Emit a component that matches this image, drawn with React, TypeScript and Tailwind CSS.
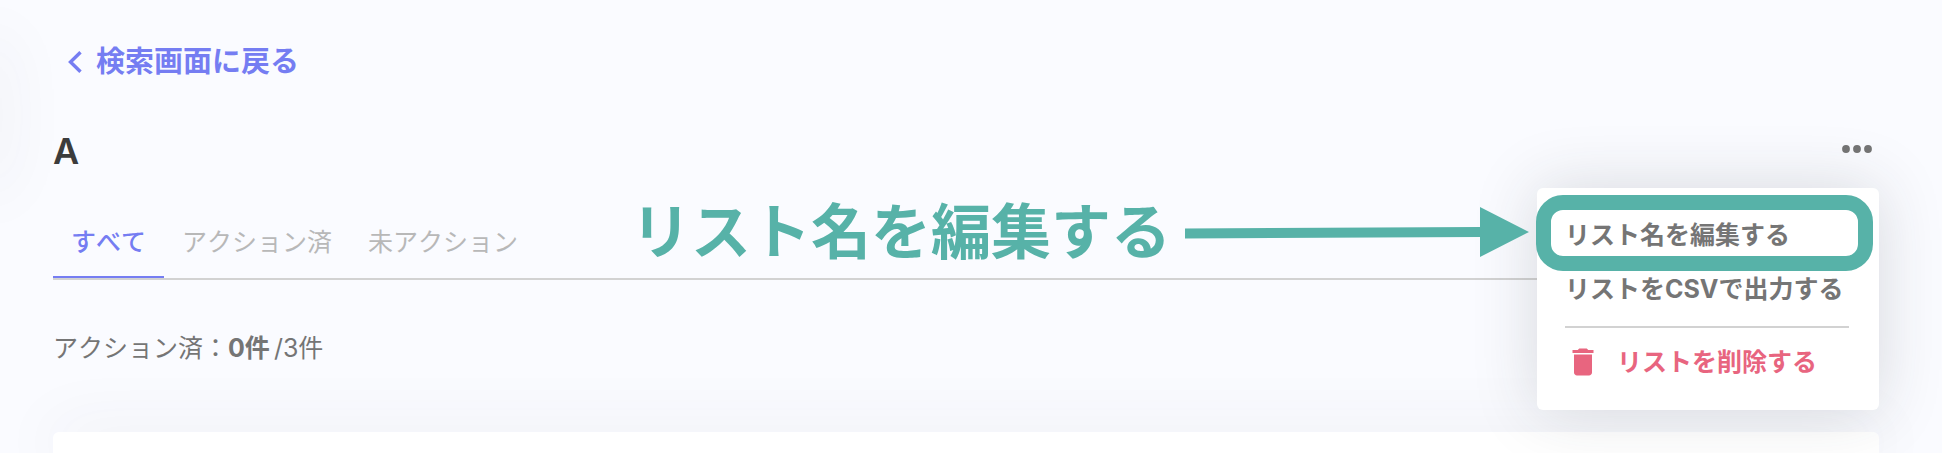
import { MdDelete } from "react-icons/md";

const TABS = ["すべて", "アクション済", "未アクション"];

function Tab({ label, active }: { label: string; active: boolean }) {
  return (
    <button
      type="button"
      role="tab"
      aria-selected={active}
      className={
        active
          ? "border-b-2 border-[#757df2] px-[18px] pb-4 font-medium text-[#757df2]"
          : "border-b-2 border-transparent px-[18px] pb-4 text-[#b8b8b8]"
      }
    >
      {label}
    </button>
  );
}

function Callout() {
  return (
    <>
      <div className="absolute -left-px top-[7px] h-[76px] w-[337px] rounded-[27px] border-[15px] border-[#57b2a8]" />
      <div className="absolute right-full top-2 mr-2 flex items-center gap-[14px] text-[#57b2a8]">
        <span className="whitespace-nowrap text-[60px] leading-[72px] font-bold">
          リスト名を編集する
        </span>
        <svg className="shrink-0" width="344" height="50" viewBox="0 0 344 50" fill="currentColor">
          <path d="M0 21.5 L295 20 V0 L344 25 L295 50 V30 L0 31.5 Z" />
        </svg>
      </div>
    </>
  );
}

function ListMenu() {
  return (
    <div className="absolute right-0 top-[58px] z-10 w-[342px] rounded-md bg-white pt-[29px] pr-[30px] pb-[30px] pl-7 leading-9 font-bold text-[#757575] shadow-[0_0_64px_rgba(40,45,55,0.17)]">
      <button type="button" className="block">
        リスト名を編集する
      </button>
      <button type="button" className="mt-[18px] block whitespace-nowrap">
        リストをCSVで出力する
      </button>
      <hr className="mt-[19px] border-t-2 border-[#d2d2d2]" />
      <button type="button" className="mt-4 flex items-center gap-4 whitespace-nowrap text-[#e8657f]">
        <MdDelete className="size-9" />
        リストを削除する
      </button>
      <Callout />
    </div>
  );
}

export default function App() {
  return (
    <div className="relative flex h-screen flex-col overflow-hidden bg-[#fafbff] pr-[63px] pl-[53px] pt-10 font-['Inter','Noto_Sans_CJK_JP',sans-serif] text-[25px] leading-9 text-[#757575] [font-kerning:none]">
      {/* shadow cast by the side menu */}
      <div className="absolute -left-5 top-10 h-[150px] w-5 shadow-[0_0_64px_rgba(60,60,80,0.1)]" />

      <a
        href="#"
        className="flex items-center gap-[14px] self-start pl-[15px] text-[29px] leading-[44px] font-bold text-[#757df2]"
      >
        <svg width="14" height="22" viewBox="0 0 14 22" fill="none" stroke="currentColor" strokeWidth="3.4">
          <path d="M12.5 1.2 L2.5 11 L12.5 20.8" />
        </svg>
        検索画面に戻る
      </a>

      <header className="relative mt-[46px] flex items-center justify-between">
        <h1 className="text-[36px] leading-[42px] font-semibold text-[#3c3c3c]">A</h1>
        <button type="button" aria-label="メニュー" className="mr-[7px] mb-1">
          <svg width="30" height="8" viewBox="0 0 30 8" fill="currentColor">
            <circle cx="4" cy="4" r="3.9" />
            <circle cx="15" cy="4" r="3.9" />
            <circle cx="26" cy="4" r="3.9" />
          </svg>
        </button>
        <ListMenu />
      </header>

      <div role="tablist" className="mt-[52px] flex border-b-2 border-[#d2d2d2]">
        {TABS.map((t, i) => (
          <Tab key={t} label={t} active={i === 0} />
        ))}
      </div>

      <p className="mt-[50px]">
        アクション済：<strong className="mr-1">0件</strong>/3件
      </p>

      <div className="mt-[66px] flex-1 rounded-t-md bg-white shadow-[0_0_64px_rgba(60,60,80,0.1)]" />
    </div>
  );
}
